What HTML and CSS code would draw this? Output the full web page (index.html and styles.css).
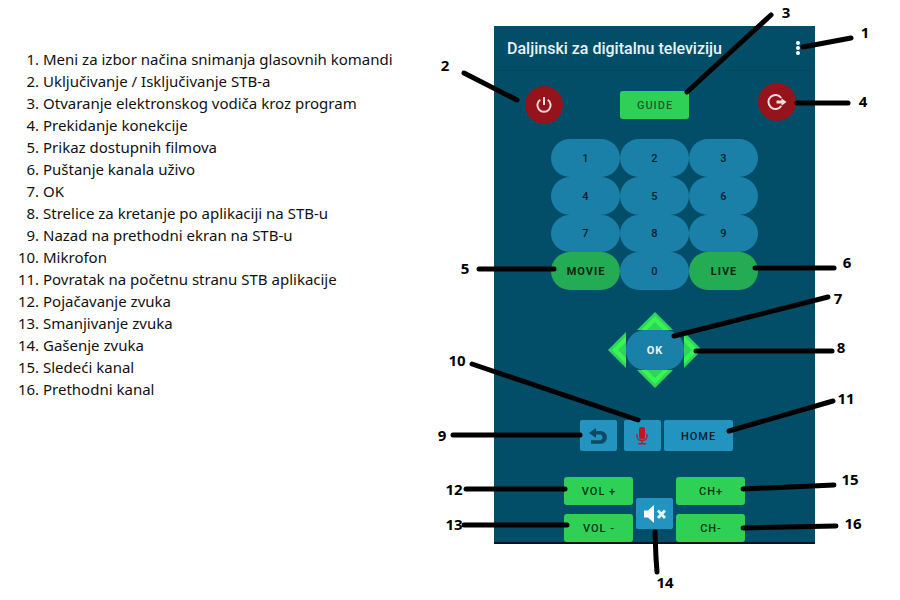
FILE: index.html
```html
<!DOCTYPE html>
<html lang="sr-Latn">
<head>
<meta charset="utf-8">
<meta name="viewport" content="width=device-width, initial-scale=1">
<title>Daljinski za digitalnu televiziju</title>
<link rel="stylesheet" href="styles.css">
</head>
<body>
<main class="guide">
  <ol class="legend">
    <li>Meni za izbor načina snimanja glasovnih komandi</li>
    <li>Uključivanje / Isključivanje STB-a</li>
    <li>Otvaranje elektronskog vodiča kroz program</li>
    <li>Prekidanje konekcije</li>
    <li>Prikaz dostupnih filmova</li>
    <li>Puštanje kanala uživo</li>
    <li>OK</li>
    <li>Strelice za kretanje po aplikaciji na STB-u</li>
    <li>Nazad na prethodni ekran na STB-u</li>
    <li>Mikrofon</li>
    <li>Povratak na početnu stranu STB aplikacije</li>
    <li>Pojačavanje zvuka</li>
    <li>Smanjivanje zvuka</li>
    <li>Gašenje zvuka</li>
    <li>Sledeći kanal</li>
    <li>Prethodni kanal</li>
  </ol>

  <div class="diagram">
    <section class="phone">
      <header class="appbar">
        <h1 class="title">Daljinski za digitalnu televiziju</h1>
        <button class="menu" type="button" aria-label="Meni">
          <svg width="6" height="14" viewBox="0 0 6 14"><circle cx="3" cy="2" r="2"/><circle cx="3" cy="7" r="2"/><circle cx="3" cy="12" r="2"/></svg>
        </button>
      </header>

      <div class="top">
        <button class="round power" type="button" aria-label="Uključivanje">
          <svg width="18" height="18" viewBox="0 0 18 18"><path d="M9 1v8M5.200 3.800a6.600 6.600 0 1 0 7.600 0"/></svg>
        </button>
        <button class="btn green guide-btn" type="button">GUIDE</button>
        <button class="round exit" type="button" aria-label="Prekidanje konekcije">
          <svg width="20" height="18" viewBox="0 0 20 18"><path d="M14.200 5a7 7 0 1 0 0 8"/><path class="solid" d="M9.500 7.500h5V5.200L19.500 9l-5 3.800v-2.300h-5z"/></svg>
        </button>
      </div>

      <div class="keypad">
        <button class="key" type="button">1</button>
        <button class="key" type="button">2</button>
        <button class="key" type="button">3</button>
        <button class="key" type="button">4</button>
        <button class="key" type="button">5</button>
        <button class="key" type="button">6</button>
        <button class="key" type="button">7</button>
        <button class="key" type="button">8</button>
        <button class="key" type="button">9</button>
        <button class="key media" type="button">MOVIE</button>
        <button class="key" type="button">0</button>
        <button class="key media" type="button">LIVE</button>
      </div>

      <div class="dpad">
        <button class="arrow up" type="button" aria-label="Gore">
          <svg width="36" height="18" viewBox="0 0 36 18"><path fill="#2fd45a" d="M18 0 36 18H0z"/><path fill="#37f552" d="M18 4 32 18H4z"/><path fill="#2fd45a" d="M18 10 26 18H10z"/></svg>
        </button>
        <button class="arrow left" type="button" aria-label="Levo">
          <svg width="18" height="36" viewBox="0 0 18 36"><path fill="#2fd45a" d="M0 18 18 0V36z"/><path fill="#37f552" d="M4 18 18 4V32z"/><path fill="#2fd45a" d="M10 18 18 10V26z"/></svg>
        </button>
        <button class="key ok" type="button">OK</button>
        <button class="arrow right" type="button" aria-label="Desno">
          <svg width="18" height="36" viewBox="0 0 18 36"><path fill="#2fd45a" d="M18 18 0 0V36z"/><path fill="#37f552" d="M14 18 0 4V32z"/><path fill="#2fd45a" d="M8 18 0 10V26z"/></svg>
        </button>
        <button class="arrow down" type="button" aria-label="Dole">
          <svg width="36" height="18" viewBox="0 0 36 18"><path fill="#2fd45a" d="M18 18 36 0H0z"/><path fill="#37f552" d="M18 14 32 0H4z"/><path fill="#2fd45a" d="M18 8 26 0H10z"/></svg>
        </button>
      </div>

      <div class="actions">
        <button class="btn blue back" type="button" aria-label="Nazad">
          <svg width="18" height="16" viewBox="0 0 18 16"><path fill="#0e4a66" d="M0 5 7 0v3h4.500a6.400 6.400 0 0 1 0 12.800H2v-3.600h9.300a3 3 0 0 0 0-5.800H7V10z"/></svg>
        </button>
        <button class="btn blue" type="button" aria-label="Mikrofon">
          <svg width="12" height="18" viewBox="0 0 12 18"><rect x="3" y="0" width="6" height="12" rx="2" fill="#cc1020"/><path d="M1 7v2.500a5 4 0 0 0 10 0V7M6 13.500v3M2 16.800h8" fill="none" stroke="#b01c38" stroke-width="1.400"/></svg>
        </button>
        <button class="btn blue home" type="button">HOME</button>
      </div>

      <div class="levels">
        <button class="btn green" type="button">VOL +</button>
        <button class="btn blue mute" type="button" aria-label="Gašenje zvuka">
          <svg width="24" height="18" viewBox="0 0 24 18"><path fill="#fff" d="M1 5.500h4L11 0v18l-6-5.500H1z"/><path d="M15 5.500l7 7.500M22 5.500l-7 7.500" stroke="#e4f4fb" stroke-width="2.800"/></svg>
        </button>
        <button class="btn green" type="button">CH+</button>
        <button class="btn green" type="button">VOL -</button>
        <button class="btn green" type="button">CH-</button>
      </div>
    </section>

    <svg class="callouts" viewBox="430 0 470 600" aria-hidden="true">
      <g class="leaders">
        <path d="M803 47 851 38"/>
        <path d="M464 73 517 100"/>
        <path d="M687 92 771 15"/>
        <path d="M797 103H848"/>
        <path d="M479 269H554"/>
        <path d="M755 268H834"/>
        <path d="M674 336 828 297"/>
        <path d="M696 351H832"/>
        <path d="M453 435H580"/>
        <path d="M472 364 638 420"/>
        <path d="M729 431 833 401"/>
        <path d="M466 489H565"/>
        <path d="M464 525H567"/>
        <path d="M655 532 656 558 657 572"/>
        <path d="M743 489 834 485"/>
        <path d="M743 528 836 526"/>
      </g>
      <g class="numbers">
        <text x="865" y="38">1</text>
        <text x="445" y="71">2</text>
        <text x="786" y="18">3</text>
        <text x="863" y="107">4</text>
        <text x="465" y="274">5</text>
        <text x="847" y="268">6</text>
        <text x="838" y="304">7</text>
        <text x="841" y="353">8</text>
        <text x="442" y="441">9</text>
        <text x="457" y="366">10</text>
        <text x="846" y="404">11</text>
        <text x="454" y="495">12</text>
        <text x="454" y="530">13</text>
        <text x="665" y="588">14</text>
        <text x="850" y="485">15</text>
        <text x="853" y="529">16</text>
      </g>
    </svg>
  </div>
</main>
</body>
</html>
```
FILE: styles.css
```css
* { box-sizing: border-box; }

body {
  margin: 0;
  background: #fff;
  color: #111;
  font-family: "Noto Sans", "Open Sans", sans-serif;
}

.guide {
  display: grid;
  grid-template-columns: minmax(0, 1fr) 470px;
  align-items: start;
}

.legend {
  margin: 48px 0 0;
  padding-left: 43px;
  font-size: 15px;
  line-height: 22px;
}

.diagram {
  position: relative;
  padding: 26px 85px 56px 64px;
}

.callouts {
  position: absolute;
  top: 0;
  left: 0;
  width: 100%;
  pointer-events: none;
}
.leaders { fill: none; stroke: #000; stroke-width: 5; stroke-linecap: round; }
.numbers { font-size: 15px; font-weight: 700; text-anchor: middle; }

.phone {
  background: #024e69;
  border-bottom: 2px solid #06151c;
  font-family: Roboto, sans-serif;
}

button {
  display: flex;
  align-items: center;
  justify-content: center;
  margin: 0;
  padding: 0;
  border: 0;
  background: none;
  font: 500 11px/16px Roboto, sans-serif;
  letter-spacing: 1px;
  color: #06202c;
}

.appbar {
  display: flex;
  align-items: center;
  justify-content: space-between;
  height: 45px;
  padding: 0 14px 0 13px;
  border-bottom: 1px solid #05475f;
}
.title {
  margin: 0;
  padding-top: 2px;
  font-size: 16px;
  line-height: 20px;
  font-weight: 500;
  color: #e8f4f8;
}
.menu { fill: #fff; }

.top {
  display: grid;
  grid-template-columns: 1fr 69px 1fr;
  align-items: center;
  height: 44px;
  margin-top: 12px;
  padding: 0 19px;
}
.round {
  width: 38px;
  height: 38px;
  border-radius: 50%;
  background: #95141c;
}
.round svg { fill: none; stroke: #f6dcdc; stroke-width: 2; }
.round .solid { fill: #f6dcdc; stroke: none; }
.power { margin-left: 12px; }
.exit { align-self: start; justify-self: end; }

.btn { height: 28px; border-radius: 3px; }
.green { background: #2ed156; color: #0a3216; }
.blue { height: 31px; border-radius: 2px; background: #2394c0; }
.guide-btn { color: #1d5c31; }
.key, .green, .home { padding: 2px 0 0 1px; }

.keypad {
  display: grid;
  grid-template-columns: repeat(3, 69px);
  grid-template-rows: repeat(4, 1fr);
  justify-content: center;
  height: 151px;
  margin-top: 12px;
}
.key { border-radius: 19px; background: #1b80a7; }
.media { background: #24ac55; color: #06260f; font-weight: 700; }

.dpad {
  display: grid;
  grid-template-columns: 18px 58px 18px;
  grid-template-rows: 18px 40px 18px;
  place-content: center;
  place-items: center;
  margin-top: 22px;
}
.up, .down { grid-column: 2; }
.left { grid-column: 1; }
.ok { width: 58px; height: 40px; color: #e6f5fa; font-weight: 700; }

.actions {
  display: flex;
  justify-content: center;
  gap: 3px;
  margin-top: 32px;
  padding-left: 3px;
}
.actions .btn { width: 37px; }
.actions .back { margin-right: 4px; }
.actions .home { width: 69px; }

.levels {
  display: grid;
  grid-template-columns: 69px 37px 69px;
  justify-content: center;
  gap: 9px 3px;
  margin-top: 26px;
}
.mute { grid-row: span 2; margin-top: 21px; }
```
